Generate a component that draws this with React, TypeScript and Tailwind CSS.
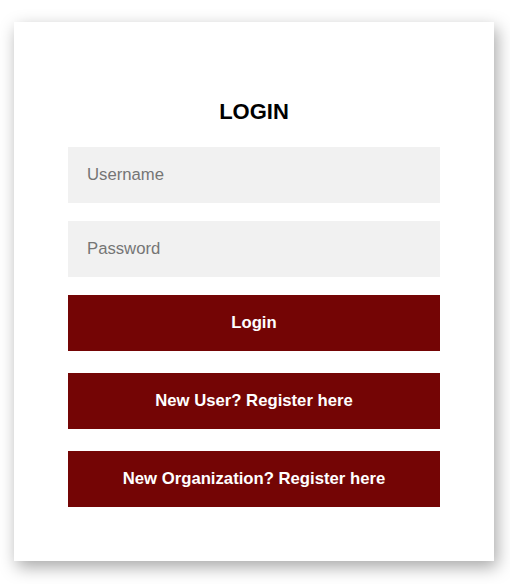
import React from 'react';

const Login = () => {
    return (
        <div className="min-h-screen bg-white pt-[22px] pl-[14px]" style={{ fontFamily: '"Liberation Sans", Arial, sans-serif' }}>
            {/* Card */}
            <div className="w-[480px] bg-white px-[54px] pt-[77px] pb-[54px] shadow-[3px_6px_16px_rgba(0,0,0,0.35)]">
                <h1 className="text-center text-[22px] leading-[25px] font-bold text-black mb-[23px]">LOGIN</h1>

                <input
                    type="text"
                    placeholder="Username"
                    className="block w-full h-[56px] bg-[#f1f1f1] px-[19px] text-[16.7px] text-black placeholder:text-[#757575] outline-none mb-[18px]"
                />
                <input
                    type="password"
                    placeholder="Password"
                    className="block w-full h-[56px] bg-[#f1f1f1] px-[19px] text-[16.7px] text-black placeholder:text-[#757575] outline-none mb-[18px]"
                />

                <div className="flex flex-col gap-[22px]">
                    <button className="h-[56px] w-full bg-[#740505] text-white text-[16.7px] font-bold">Login</button>
                    <button className="h-[56px] w-full bg-[#740505] text-white text-[16.7px] font-bold">New User? Register here</button>
                    <button className="h-[56px] w-full bg-[#740505] text-white text-[16.7px] font-bold">New Organization? Register here</button>
                </div>
            </div>
        </div>
    );
};

export default Login;
